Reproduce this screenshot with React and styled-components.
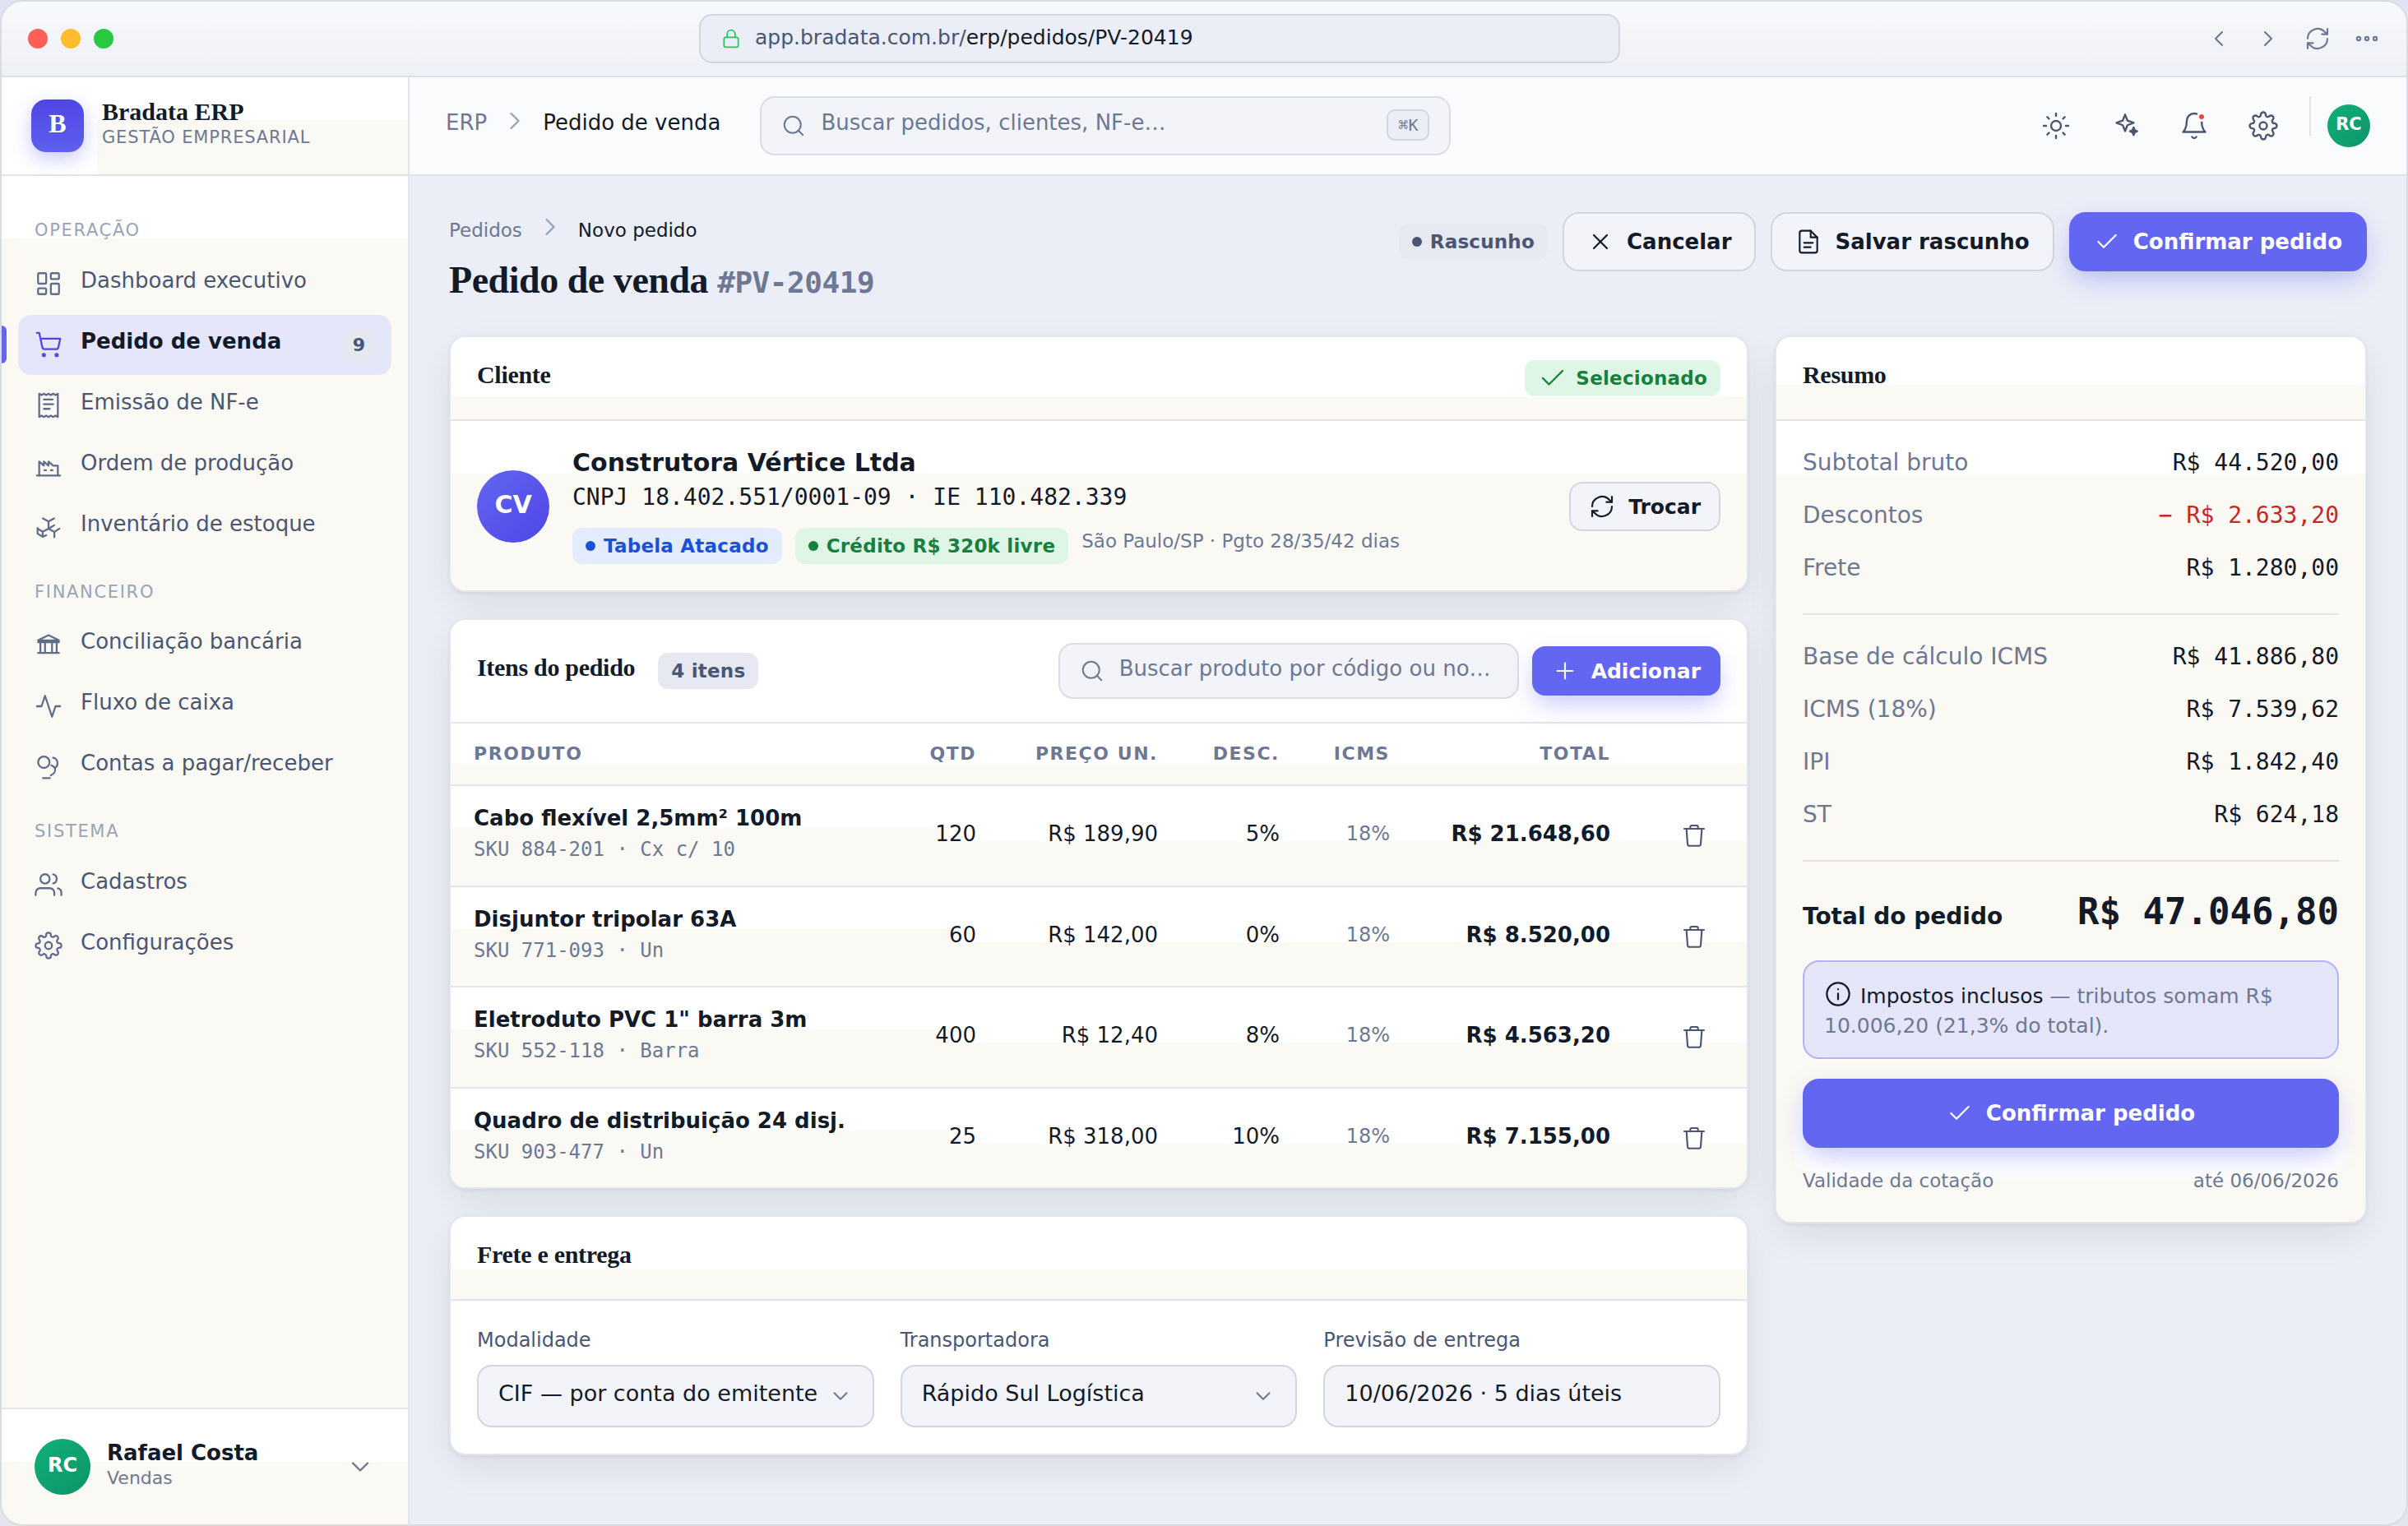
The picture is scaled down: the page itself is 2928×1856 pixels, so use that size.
import React from 'react'
import styled, { createGlobalStyle, css } from 'styled-components'
import { Check, ChevronDown, ChevronLeft, ChevronRight, LayoutDashboard, Plus, Search, ShoppingCart, Sun, X } from 'lucide-react'
import { FiBell, FiSettings, FiUsers } from 'react-icons/fi'

const sans = `'DejaVu Sans', sans-serif`
const serif = `'Liberation Serif', serif`
const mono = `'DejaVu Sans Mono', monospace`

const c = {
  ink: '#131a28',
  body: '#4a5672',
  muted: '#6d7893',
  faint: '#98a4b8',
  page: '#ebeef6',
  field: '#f3f4f9',
  line: '#e3e5ec',
  edge: '#d2d6de',
  cream: '#fbf9f3',
  brand: '#6366f1',
  brandDark: '#4f46e5',
}

// white on top, warm paper tone from `y` down
const paper = y => css`
  background: linear-gradient(180deg, #ffffff ${y}px, ${c.cream} ${y}px);
`

const GlobalStyle = createGlobalStyle`
  *,
  *::before,
  *::after {
    box-sizing: border-box;
  }

  body {
    margin: 0;
    background: linear-gradient(180deg, #dfe3f3, #e3e6ee);
    font-family: ${sans};
    font-size: 26px;
    color: ${c.ink};
  }

  svg {
    display: block;
    flex: none;
  }
`

const Window = styled.div`
  width: 2928px;
  height: 1856px;
  display: flex;
  flex-direction: column;
  border: 2px solid #d8dbe2;
  border-radius: 28px;
  background: ${c.page};
  overflow: hidden;
`

const TitleBar = styled.div`
  height: 92px;
  flex: none;
  padding: 0 32px;
  display: flex;
  align-items: center;
  border-bottom: 2px solid #dcdfe6;
  background: linear-gradient(180deg, #f8f9fc, #edf0f5);
`

const Lights = styled.div`
  flex: 1;
  display: flex;
  gap: 16px;
`

const Light = styled.span`
  width: 24px;
  height: 24px;
  border-radius: 50%;
  background: ${p => p.color};
`

const Address = styled.div`
  width: 1120px;
  height: 60px;
  margin-right: 108px;
  padding: 0 24px;
  display: flex;
  align-items: center;
  gap: 16px;
  border: 2px solid ${c.edge};
  border-radius: 16px;
  background: ${c.page};
  color: #22c55e;
`

const Url = styled.span`
  padding-bottom: 3px;
  font-size: 25px;
  line-height: 36px;
  color: ${c.body};

  b {
    font-weight: 400;
    color: ${c.ink};
  }
`

const WindowNav = styled.div`
  flex: 1;
  display: flex;
  justify-content: flex-end;
  gap: 28px;
  color: ${c.muted};
`

const Shell = styled.div`
  flex: 1;
  display: flex;
  min-height: 0;
`

const Sidebar = styled.aside`
  width: 496px;
  flex: none;
  display: flex;
  flex-direction: column;
  border-right: 2px solid ${c.line};
`

const Brand = styled.div`
  height: 120px;
  padding: 0 36px;
  display: flex;
  align-items: center;
  gap: 22px;
  border-bottom: 2px solid ${c.line};
  background: linear-gradient(90deg, #ffffff 116px, transparent 116px),
    linear-gradient(180deg, #ffffff 52px, ${c.cream} 52px);
`

const Logo = styled.div`
  width: 64px;
  height: 64px;
  padding-bottom: 5px;
  display: flex;
  align-items: center;
  justify-content: center;
  border-radius: 18px;
  background: linear-gradient(180deg, ${c.brandDark}, #5f60ef);
  box-shadow: 0 8px 24px rgba(99, 102, 241, 0.35);
  font: 700 32px ${serif};
  color: #fff;
`

const BrandText = styled.div`
  padding-bottom: 9px;
`

const BrandName = styled.div`
  font: 700 30px/36px ${serif};
`

const BrandSub = styled.div`
  font-size: 21px;
  line-height: 26px;
  letter-spacing: 0.04em;
  color: ${c.muted};
`

const Nav = styled.nav`
  flex: 1;
  padding: 25px 20px 0;
  display: flex;
  flex-direction: column;
  gap: 1px;
  ${paper(76)};
`

const NavLabel = styled.div`
  height: 68.5px;
  padding: 26px 20px 0;
  font-size: 21px;
  line-height: 30px;
  letter-spacing: 0.08em;
  color: ${c.faint};
`

const NavItem = styled.a`
  position: relative;
  height: 73px;
  padding: 0 20px;
  display: flex;
  align-items: center;
  gap: 22px;
  border-radius: 16px;
  color: #5f6c8a;
  ${p =>
    p.$active &&
    css`
      background: #e6e6fb;
      color: ${c.brandDark};

      &::before {
        content: '';
        position: absolute;
        left: -20px;
        top: 13px;
        width: 6px;
        height: 46px;
        border-radius: 0 6px 6px 0;
        background: ${c.brand};
      }
    `}
`

const NavText = styled.span`
  flex: 1;
  padding-bottom: 9px;
  line-height: 32px;
  font-weight: ${p => (p.$active ? 700 : 400)};
  color: ${p => (p.$active ? c.ink : c.body)};
`

const Count = styled.span`
  min-width: 39px;
  height: 40px;
  display: flex;
  align-items: center;
  justify-content: center;
  border-radius: 12px;
  background: #e5e8ef;
  font-size: 22px;
  font-weight: 700;
  color: ${c.body};
`

const UserBox = styled.div`
  height: 142px;
  padding: 0 40px;
  display: flex;
  align-items: center;
  gap: 20px;
  border-top: 2px solid ${c.line};
  ${paper(64)};
  color: ${c.muted};
`

const Avatar = styled.div`
  width: ${p => p.$size}px;
  height: ${p => p.$size}px;
  flex: none;
  padding-bottom: 5px;
  display: flex;
  align-items: center;
  justify-content: center;
  border-radius: 50%;
  background: ${p =>
    p.$brand ? `linear-gradient(135deg, ${c.brand}, ${c.brandDark})` : 'linear-gradient(135deg, #10b07a, #0d9468)'};
  font-size: ${p => p.$font}px;
  font-weight: 700;
  color: #fff;
`

const UserText = styled.div`
  flex: 1;
  padding-bottom: 4px;
  font-size: 22px;
  line-height: 30px;

  strong {
    display: block;
    font-size: 26px;
    line-height: 32px;
    color: ${c.ink};
  }
`

const Main = styled.div`
  flex: 1;
  display: flex;
  flex-direction: column;
`

const TopBar = styled.header`
  height: 120px;
  flex: none;
  padding: 0 44px;
  display: flex;
  align-items: center;
  border-bottom: 2px solid #dfe2e9;
  background: #fafbfd;
`

const Crumbs = styled.div`
  display: flex;
  align-items: center;
  gap: 16px;
  font-size: ${p => (p.$small ? 23 : 26)}px;
  line-height: 36px;
  color: ${c.muted};
  ${p => !p.$small && 'padding-bottom: 13px;'}

  svg {
    color: ${c.faint};
  }

  span {
    padding-top: 4px;
    ${p => p.$small && 'margin-bottom: -4px;'}
  }

  span:last-child {
    color: ${c.ink};
  }
`

const SearchBox = styled.div`
  width: ${p => p.$width}px;
  height: ${p => p.$height}px;
  padding: 0 24px;
  display: flex;
  align-items: center;
  gap: 18px;
  border: 2px solid #dadde4;
  border-radius: 18px;
  background: ${c.field};
  color: ${c.muted};

  span {
    flex: 1;
    padding-bottom: ${p => p.$lift}px;
    line-height: 32px;
    white-space: nowrap;
  }
`

const TopSearch = styled(SearchBox)`
  margin-left: 48px;
`

const Kbd = styled.kbd`
  width: 52px;
  height: 38px;
  margin-bottom: 3px;
  display: flex;
  align-items: center;
  justify-content: center;
  border: 2px solid ${c.edge};
  border-radius: 10px;
  background: ${c.page};
  font: 20px ${mono};
`

const Tools = styled.div`
  margin-left: auto;
  height: 72px;
  display: flex;
  align-items: center;
  gap: 48px;
  color: ${c.body};
`

const BellWrap = styled.div`
  position: relative;

  &::after {
    content: '';
    position: absolute;
    top: 1px;
    right: 3px;
    width: 12px;
    height: 12px;
    border: 3px solid #fff;
    border-radius: 50%;
    background: #ef4444;
  }
`

const ToolSplit = styled.div`
  align-self: flex-start;
  width: 2px;
  height: 48px;
  margin: 0 -28px 0 -10px;
  background: #dfe2e9;
`

const Content = styled.main`
  flex: 1;
  padding: 44px 48px 0;
`

const PageHead = styled.div`
  height: 150px;
  display: flex;
  justify-content: space-between;
  align-items: flex-start;
`

const Title = styled.h1`
  margin: 19px 0 0;
  font: 700 46px/56px ${serif};
  letter-spacing: -0.01em;

  span {
    font: 700 36px/56px ${mono};
    color: ${c.muted};
  }
`

const Actions = styled.div`
  display: flex;
  align-items: center;
  gap: 18px;
`

const Button = styled.button`
  height: ${p => (p.$small ? 60 : 72)}px;
  padding: 0 ${p => (p.$small ? 22 : 28)}px ${p => (p.$small ? 0 : 1)}px;
  display: flex;
  align-items: center;
  justify-content: center;
  gap: 16px;
  border: 2px solid ${c.edge};
  border-radius: ${p => (p.$small ? 16 : 20)}px;
  background: ${c.field};
  font: 700 ${p => (p.$small ? 25 : 26)}px ${sans};
  color: ${c.ink};
  white-space: nowrap;
  ${p =>
    p.$primary &&
    css`
      border-color: ${c.brand};
      background: ${c.brand};
      color: #fff;
      box-shadow: 0 12px 32px -4px rgba(99, 102, 241, 0.4);
    `}
  ${p =>
    p.$block &&
    css`
      width: 100%;
      height: 84px;
      margin-top: 24px;
      box-shadow: 0 12px 32px -4px rgba(99, 102, 241, 0.4), 0 28px 8px 8px rgba(255, 255, 255, 0.9);
    `}
`

const tones = {
  neutral: ['#e6e9f1', c.body],
  green: ['#dff6e6', '#17803f'],
  blue: ['#e2ecfd', '#1d4fd8'],
}

const Pill = styled.span`
  height: 44px;
  padding: 0 16px;
  display: flex;
  align-items: center;
  gap: 10px;
  border-radius: 12px;
  background: ${p => tones[p.$tone][0]};
  font-size: 23px;
  font-weight: 700;
  letter-spacing: 0.01em;
  line-height: 28px;
  color: ${p => tones[p.$tone][1]};
  white-space: nowrap;
  ${p =>
    p.$dot &&
    css`
      &::before {
        content: '';
        width: 12px;
        height: 12px;
        border-radius: 50%;
        background: currentColor;
      }
    `}
`

const ItemCount = styled(Pill)`
  margin-left: 28px;
`

const Columns = styled.div`
  display: grid;
  grid-template-columns: 1580px 720px;
  gap: 32px;
  align-items: start;
`

const Stack = styled.div`
  display: flex;
  flex-direction: column;
  gap: 32px;
`

const Card = styled.section`
  border: 2px solid #e4e6eb;
  border-radius: 20px;
  background: #fff;
  background-clip: padding-box;
  box-shadow: 0 2px 4px rgba(15, 23, 42, 0.06), 0 16px 48px -4px rgba(15, 23, 42, 0.09);
`

const CardHead = styled.div`
  height: ${p => p.$height || 102}px;
  padding: 0 32px;
  display: flex;
  align-items: center;
  border-bottom: 2px solid ${c.line};
  border-radius: 18px 18px 0 0;
  ${p => paper(p.$split || 200)};
`

const CardTitle = styled.h2`
  margin: 0;
  padding-bottom: 8px;
  font: 700 30px/36px ${serif};
  letter-spacing: -0.01em;
`

const HeadRight = styled.div`
  margin-left: auto;
  display: flex;
  align-items: center;
  gap: 16px;
`

const ClientBody = styled.div`
  height: 206px;
  padding: 2px 32px 0;
  display: flex;
  align-items: center;
  gap: 28px;
  border-radius: 0 0 18px 18px;
  ${paper(64)};
`

const ClientText = styled.div`
  flex: 1;
  padding-bottom: 4px;
`

const ClientName = styled.div`
  font-size: 30px;
  font-weight: 700;
  line-height: 42px;
`

const ClientDoc = styled.div`
  font: 28px/42px ${mono};
`

const Tags = styled.div`
  margin-top: 16px;
  display: flex;
  align-items: center;
  gap: 16px;
`

const Terms = styled.span`
  padding-bottom: 13px;
  font-size: 23px;
  line-height: 30px;
  color: ${c.muted};
`

const rowGrid = css`
  display: grid;
  grid-template-columns: 667px 221px 148px 134px 268px 138px;
  align-items: center;
`

const TableHead = styled.div`
  ${rowGrid};
  height: 76px;
  border-bottom: 2px solid ${c.line};
  ${paper(49)};
  font-size: 22px;
  font-weight: 700;
  letter-spacing: 0.07em;
  line-height: 28px;
  color: ${c.muted};
`

const TableRow = styled.div`
  ${rowGrid};
  height: 122.5px;
  border-bottom: 2px solid ${c.line};
  background: linear-gradient(180deg, #ffffff 51px, ${c.cream} 51px) 0 0 / 607px 100% no-repeat,
    linear-gradient(180deg, #ffffff 67px, ${c.cream} 67px);

  &:last-child {
    height: 120.5px;
    border-bottom: 0;
    border-radius: 0 0 18px 18px;
  }
`

const Cell = styled.div`
  padding: 0 28px 4px 0;
  text-align: right;
  font-size: ${p => p.$size || 'inherit'};
  font-weight: ${p => (p.$strong ? 700 : 'inherit')};
  color: ${p => (p.$muted ? c.muted : 'inherit')};
`

const HeadCell = styled(Cell)`
  padding-bottom: 1px;
`

const Product = styled.div`
  display: grid;
  grid-template-columns: 500px 1fr;
  align-items: center;
  padding-left: 28px;
`

const ProductText = styled.div`
  padding-bottom: 4px;
  white-space: nowrap;
`

const ProductName = styled.div`
  font-weight: 700;
  line-height: 38px;
`

const ProductSku = styled.div`
  font: 24px/38px ${mono};
  color: ${c.muted};
`

const RemoveCell = styled.div`
  display: flex;
  justify-content: flex-end;
  padding-right: 48px;
  color: ${c.body};
`

const ShippingBody = styled.div`
  height: 186px;
  padding: 32px;
  display: grid;
  grid-template-columns: repeat(3, 1fr);
  gap: 32px;
`

const FieldLabel = styled.div`
  margin-bottom: 14px;
  font-size: 24px;
  line-height: 32px;
  color: ${c.body};
`

const FieldBox = styled.div`
  height: 76px;
  padding: 0 24px;
  display: flex;
  align-items: center;
  justify-content: space-between;
  border: 2px solid ${c.edge};
  border-radius: 18px;
  background: ${c.field};
  font-size: 27px;
  white-space: nowrap;

  span {
    padding-bottom: 7px;
  }

  svg {
    color: ${c.muted};
  }
`

const SummaryBody = styled.div`
  height: 974px;
  padding: 18px 32px 0;
  border-radius: 0 0 18px 18px;
  ${paper(65)};
`

const SummaryRow = styled.div`
  height: 64px;
  display: flex;
  align-items: center;
  justify-content: space-between;
  font-size: 28px;
  color: ${c.muted};

  b {
    font: 28px ${mono};
    color: ${p => (p.$negative ? '#c62828' : c.ink)};
  }
`

const Rule = styled.div`
  height: 2px;
  margin: 24px 0 18px;
  background: ${c.line};
`

const Total = styled.div`
  padding-top: 13px;
  display: flex;
  align-items: baseline;
  justify-content: space-between;
  font-size: 28px;
  font-weight: 700;

  b {
    font: 700 44px/60px ${mono};
  }
`

const Notice = styled.div`
  height: 120px;
  margin-top: 29px;
  padding: 22px 24px 0;
  border: 2px solid #b3b4f7;
  border-radius: 20px;
  background: #e6e6fb;
  font-size: 25px;
  line-height: 36px;
  color: ${c.muted};

  svg {
    display: inline-block;
    margin-right: 2px;
    vertical-align: -6px;
    color: ${c.ink};
  }

  b {
    font-weight: 400;
    color: ${c.ink};
  }
`

const Validity = styled.div`
  position: relative;
  margin-top: 24px;
  display: flex;
  justify-content: space-between;
  font-size: 23px;
  line-height: 32px;
  color: ${c.muted};
`

const Glyph = ({ size = 34, children }) => (
  <svg
    width={size}
    height={size}
    viewBox="0 0 24 24"
    fill="none"
    stroke="currentColor"
    strokeWidth="1.6"
    strokeLinecap="round"
    strokeLinejoin="round"
  >
    {children}
  </svg>
)

const LockIcon = () => (
  <Glyph size={26}>
    <rect x="4" y="10.5" width="16" height="11" rx="2" />
    <path d="M7.5 10.5V7a4.5 4.5 0 0 1 9 0v3.5" />
  </Glyph>
)

const RefreshIcon = ({ size }) => (
  <Glyph size={size}>
    <path d="M3 12a9 9 0 0 1 15.5-6.2L21 8" />
    <path d="M21 3v5h-5" />
    <path d="M21 12a9 9 0 0 1-15.5 6.2L3 16" />
    <path d="M3 21v-5h5" />
  </Glyph>
)

const MoreIcon = () => (
  <Glyph size={32}>
    <circle cx="4.5" cy="12" r="1.6" />
    <circle cx="12" cy="12" r="1.6" />
    <circle cx="19.5" cy="12" r="1.6" />
  </Glyph>
)

const ReceiptIcon = () => (
  <Glyph>
    <path d="M4 2v20l2-1.2 2 1.2 2-1.2 2 1.2 2-1.2 2 1.2 2-1.2 2 1.2V2l-2 1.2L16 2l-2 1.2L12 2l-2 1.2L8 2 6 3.2 4 2z" />
    <path d="M8 7h7.5M8 11h8M8 15h5" />
  </Glyph>
)

const FactoryIcon = () => (
  <Glyph>
    <path d="M2 20h20" />
    <path d="M4 20V8l4 3.5V8l4 3.5V8l4 3.5h4V20" />
    <path d="M8.5 15.5h1.4M14 15.5h1.4" />
  </Glyph>
)

const StockIcon = () => (
  <Glyph>
    <path d="M7.2 4.6 12 7.2l4.8-2.6M12 7.2v6.2l4.9-2.9" />
    <path d="M12 13.4l5 2.8 4.4-2.9M17 16.2v4.6" />
    <path d="M12 13.4l-5 2.7-4-2.5M2.6 12.8v4.8L7 20.4l3-1.4M7 16.1v4.3" />
  </Glyph>
)

const BankIcon = () => (
  <Glyph>
    <path d="M12 3.2 21 7.6H3z" />
    <path d="M3 9.2h18M3 18.4h18M5 9.2v9.2M9 9.2v9.2M15 9.2v9.2M19 9.2v9.2" />
  </Glyph>
)

const FlowIcon = () => (
  <Glyph>
    <path d="M22 12h-4l-3 9L9 3l-3 9H2" />
  </Glyph>
)

const CoinsIcon = () => (
  <Glyph>
    <circle cx="8" cy="7.8" r="4.9" />
    <path d="M16 3.9a4.8 4.8 0 0 1 1.4 8.8c-.8-1.2-1.6-1.9-3-2.2" />
    <path d="M17.4 12.7c.9 2.6-.6 5.2-3.4 6.4" />
    <path d="M7.2 21.4h6" />
  </Glyph>
)

const SparkleIcon = () => (
  <Glyph size={36}>
    <path d="M12 2.9l1.9 4.8 5.1 1.9-5.1 1.9L12 16.3l-1.9-4.8L5 9.6l5.1-1.9z" />
    <path d="M18.9 13.3l.9 2.2 2 .9-2 .9-.9 2.2-.9-2.2-2-.9 2-.9z" fill="currentColor" />
  </Glyph>
)

const DraftIcon = () => (
  <Glyph size={32}>
    <path d="M14 2H6a2 2 0 0 0-2 2v16a2 2 0 0 0 2 2h12a2 2 0 0 0 2-2V8z" />
    <path d="M14 2v6h6M8 13h8M8 17h6" />
  </Glyph>
)

const TrashIcon = () => (
  <Glyph size={32}>
    <path d="M3 6h18M8.5 6V4.2c0-.7.5-1.2 1.2-1.2h4.6c.7 0 1.2.5 1.2 1.2V6" />
    <path d="M5 6l1 14c.1.9.8 1.6 1.7 1.6h8.6c.9 0 1.6-.7 1.7-1.6L19 6" />
  </Glyph>
)

const InfoIcon = () => (
  <Glyph size={34}>
    <circle cx="12" cy="12" r="9.6" />
    <path d="M12 11.5v5M12 7.8v.1" />
  </Glyph>
)

const line = { strokeWidth: 1.6 }

const menu = [
  {
    label: 'OPERAÇÃO',
    items: [
      { text: 'Dashboard executivo', icon: <LayoutDashboard size={34} {...line} /> },
      { text: 'Pedido de venda', icon: <ShoppingCart size={34} {...line} />, count: 9, active: true },
      { text: 'Emissão de NF-e', icon: <ReceiptIcon /> },
      { text: 'Ordem de produção', icon: <FactoryIcon /> },
      { text: 'Inventário de estoque', icon: <StockIcon /> },
    ],
  },
  {
    label: 'FINANCEIRO',
    items: [
      { text: 'Conciliação bancária', icon: <BankIcon /> },
      { text: 'Fluxo de caixa', icon: <FlowIcon /> },
      { text: 'Contas a pagar/receber', icon: <CoinsIcon /> },
    ],
  },
  {
    label: 'SISTEMA',
    items: [
      { text: 'Cadastros', icon: <FiUsers size={34} {...line} /> },
      { text: 'Configurações', icon: <FiSettings size={34} {...line} /> },
    ],
  },
]

const items = [
  { name: 'Cabo flexível 2,5mm² 100m', sku: 'SKU 884-201 · Cx c/ 10', qty: '120', price: 'R$ 189,90', off: '5%', total: 'R$ 21.648,60' },
  { name: 'Disjuntor tripolar 63A', sku: 'SKU 771-093 · Un', qty: '60', price: 'R$ 142,00', off: '0%', total: 'R$ 8.520,00' },
  { name: 'Eletroduto PVC 1" barra 3m', sku: 'SKU 552-118 · Barra', qty: '400', price: 'R$ 12,40', off: '8%', total: 'R$ 4.563,20' },
  { name: 'Quadro de distribuição 24 disj.', sku: 'SKU 903-477 · Un', qty: '25', price: 'R$ 318,00', off: '10%', total: 'R$ 7.155,00' },
]

const Chrome = () => (
  <TitleBar>
    <Lights>
      <Light color="#ff5f57" />
      <Light color="#febc2e" />
      <Light color="#28c840" />
    </Lights>
    <Address>
      <LockIcon />
      <Url>
        app.bradata.com.br/<b>erp/pedidos/PV-20419</b>
      </Url>
    </Address>
    <WindowNav>
      <ChevronLeft size={32} {...line} />
      <ChevronRight size={32} {...line} />
      <RefreshIcon size={32} />
      <MoreIcon />
    </WindowNav>
  </TitleBar>
)

const SideMenu = () => (
  <Sidebar>
    <Brand>
      <Logo>B</Logo>
      <BrandText>
        <BrandName>Bradata ERP</BrandName>
        <BrandSub>GESTÃO EMPRESARIAL</BrandSub>
      </BrandText>
    </Brand>
    <Nav>
      {menu.map(group => (
        <React.Fragment key={group.label}>
          <NavLabel>{group.label}</NavLabel>
          {group.items.map(item => (
            <NavItem key={item.text} $active={item.active}>
              {item.icon}
              <NavText $active={item.active}>{item.text}</NavText>
              {item.count && <Count>{item.count}</Count>}
            </NavItem>
          ))}
        </React.Fragment>
      ))}
    </Nav>
    <UserBox>
      <Avatar $size={68} $font={24}>RC</Avatar>
      <UserText>
        <strong>Rafael Costa</strong>
        Vendas
      </UserText>
      <ChevronDown size={36} {...line} />
    </UserBox>
  </Sidebar>
)

const Header = () => (
  <TopBar>
    <Crumbs>
      <span>ERP</span>
      <ChevronRight size={36} {...line} />
      <span>Pedido de venda</span>
    </Crumbs>
    <TopSearch $width={840} $height={72} $lift={8}>
      <Search size={30} {...line} />
      <span>Buscar pedidos, clientes, NF-e…</span>
      <Kbd>⌘K</Kbd>
    </TopSearch>
    <Tools>
      <Sun size={36} {...line} />
      <SparkleIcon />
      <BellWrap>
        <FiBell size={36} {...line} />
      </BellWrap>
      <FiSettings size={36} {...line} />
      <ToolSplit />
      <Avatar $size={52} $font={21}>RC</Avatar>
    </Tools>
  </TopBar>
)

const Client = () => (
  <Card>
    <CardHead $split={73}>
      <CardTitle>Cliente</CardTitle>
      <HeadRight>
        <Pill $tone="green">
          <Check size={36} {...line} />
          Selecionado
        </Pill>
      </HeadRight>
    </CardHead>
    <ClientBody>
      <Avatar $size={88} $font={30} $brand>CV</Avatar>
      <ClientText>
        <ClientName>Construtora Vértice Ltda</ClientName>
        <ClientDoc>CNPJ 18.402.551/0001-09 · IE 110.482.339</ClientDoc>
        <Tags>
          <Pill $tone="blue" $dot>Tabela Atacado</Pill>
          <Pill $tone="green" $dot>Crédito R$ 320k livre</Pill>
          <Terms>São Paulo/SP · Pgto 28/35/42 dias</Terms>
        </Tags>
      </ClientText>
      <Button $small>
        <RefreshIcon size={32} />
        Trocar
      </Button>
    </ClientBody>
  </Card>
)

const Items = () => (
  <Card>
    <CardHead $height={126}>
      <CardTitle>Itens do pedido</CardTitle>
      <ItemCount $tone="neutral">4 itens</ItemCount>
      <HeadRight>
        <SearchBox $width={560} $height={68} $lift={6}>
          <Search size={30} {...line} />
          <span>Buscar produto por código ou no…</span>
        </SearchBox>
        <Button $small $primary>
          <Plus size={32} {...line} />
          Adicionar
        </Button>
      </HeadRight>
    </CardHead>
    <TableHead>
      <Product>
        <span>PRODUTO</span>
        <HeadCell>QTD</HeadCell>
      </Product>
      <HeadCell>PREÇO UN.</HeadCell>
      <HeadCell>DESC.</HeadCell>
      <HeadCell>ICMS</HeadCell>
      <HeadCell>TOTAL</HeadCell>
    </TableHead>
    <div>
      {items.map(item => (
        <TableRow key={item.sku}>
          <Product>
            <ProductText>
              <ProductName>{item.name}</ProductName>
              <ProductSku>{item.sku}</ProductSku>
            </ProductText>
            <Cell>{item.qty}</Cell>
          </Product>
          <Cell>{item.price}</Cell>
          <Cell>{item.off}</Cell>
          <Cell $muted $size="24px">18%</Cell>
          <Cell $strong>{item.total}</Cell>
          <RemoveCell>
            <TrashIcon />
          </RemoveCell>
        </TableRow>
      ))}
    </div>
  </Card>
)

const Shipping = () => (
  <Card>
    <CardHead $split={64}>
      <CardTitle>Frete e entrega</CardTitle>
    </CardHead>
    <ShippingBody>
      <div>
        <FieldLabel>Modalidade</FieldLabel>
        <FieldBox>
          <span>CIF — por conta do emitente</span>
          <ChevronDown size={30} {...line} />
        </FieldBox>
      </div>
      <div>
        <FieldLabel>Transportadora</FieldLabel>
        <FieldBox>
          <span>Rápido Sul Logística</span>
          <ChevronDown size={30} {...line} />
        </FieldBox>
      </div>
      <div>
        <FieldLabel>Previsão de entrega</FieldLabel>
        <FieldBox>
          <span>10/06/2026 · 5 dias úteis</span>
        </FieldBox>
      </div>
    </ShippingBody>
  </Card>
)

const Summary = () => (
  <Card>
    <CardHead $split={58}>
      <CardTitle>Resumo</CardTitle>
    </CardHead>
    <SummaryBody>
      <SummaryRow>Subtotal bruto <b>R$ 44.520,00</b></SummaryRow>
      <SummaryRow $negative>Descontos <b>− R$ 2.633,20</b></SummaryRow>
      <SummaryRow>Frete <b>R$ 1.280,00</b></SummaryRow>
      <Rule />
      <SummaryRow>Base de cálculo ICMS <b>R$ 41.886,80</b></SummaryRow>
      <SummaryRow>ICMS (18%) <b>R$ 7.539,62</b></SummaryRow>
      <SummaryRow>IPI <b>R$ 1.842,40</b></SummaryRow>
      <SummaryRow>ST <b>R$ 624,18</b></SummaryRow>
      <Rule />
      <Total>Total do pedido <b>R$ 47.046,80</b></Total>
      <Notice>
        <InfoIcon /> <b>Impostos inclusos</b> — tributos somam R$ 10.006,20 (21,3% do total).
      </Notice>
      <Button $primary $block>
        <Check size={32} {...line} />
        Confirmar pedido
      </Button>
      <Validity>
        <span>Validade da cotação</span>
        <span>até 06/06/2026</span>
      </Validity>
    </SummaryBody>
  </Card>
)

const App = () => (
  <>
    <GlobalStyle />
    <Window>
      <Chrome />
      <Shell>
        <SideMenu />
        <Main>
          <Header />
          <Content>
            <PageHead>
              <div>
                <Crumbs $small>
                  <span>Pedidos</span>
                  <ChevronRight size={36} {...line} />
                  <span>Novo pedido</span>
                </Crumbs>
                <Title>
                  Pedido de venda <span>#PV-20419</span>
                </Title>
              </div>
              <Actions>
                <Pill $tone="neutral" $dot>Rascunho</Pill>
                <Button>
                  <X size={32} {...line} />
                  Cancelar
                </Button>
                <Button>
                  <DraftIcon />
                  Salvar rascunho
                </Button>
                <Button $primary>
                  <Check size={32} {...line} />
                  Confirmar pedido
                </Button>
              </Actions>
            </PageHead>
            <Columns>
              <Stack>
                <Client />
                <Items />
                <Shipping />
              </Stack>
              <Summary />
            </Columns>
          </Content>
        </Main>
      </Shell>
    </Window>
  </>
)

export default App
